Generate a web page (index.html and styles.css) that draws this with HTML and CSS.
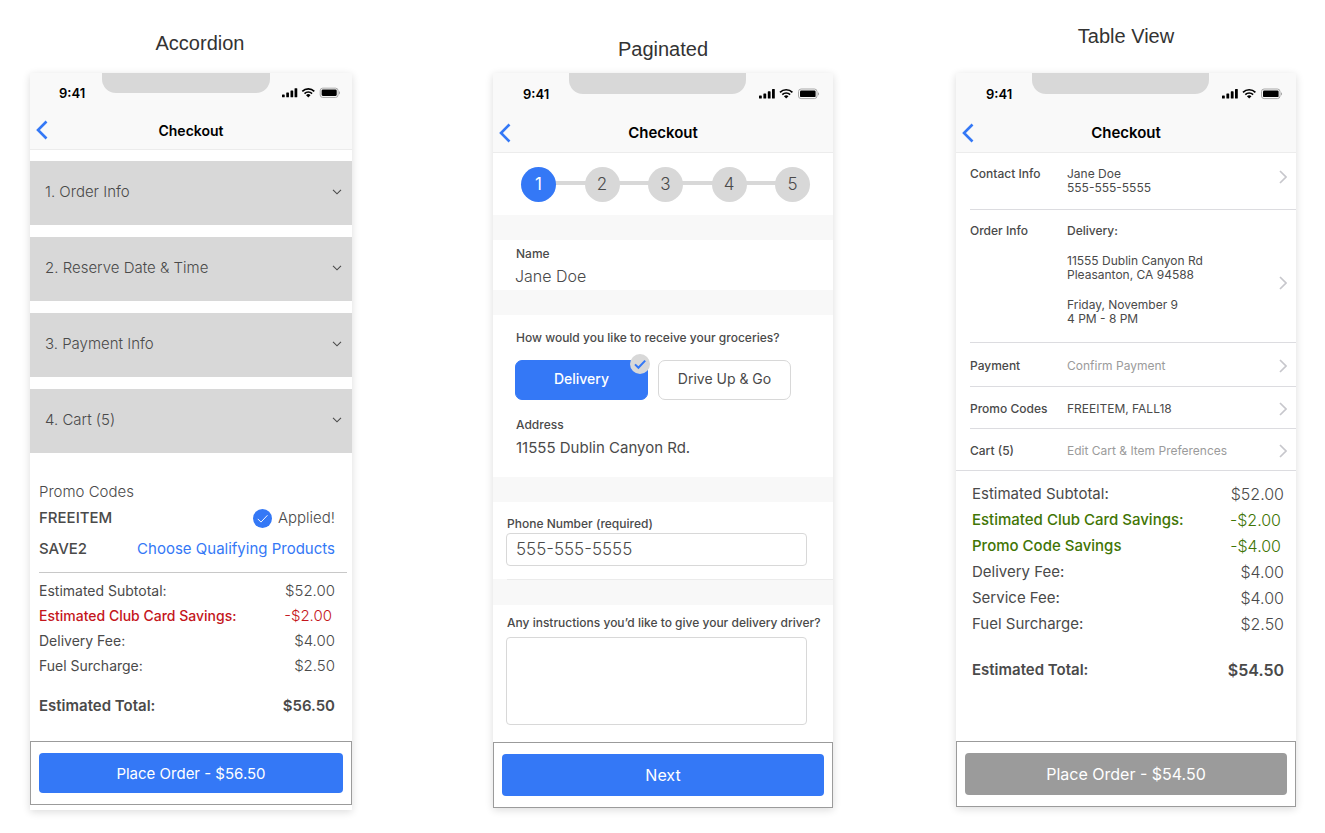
FILE: index.html
```html
<!DOCTYPE html>
<html lang="en">

<head>
    <meta charset="UTF-8">
    <meta name="viewport" content="width=device-width, initial-scale=1.0">
    <title>Checkout layouts</title>
    <link rel="stylesheet" href="styles.css">
</head>

<body>
    <!-- shared icons -->
    <svg class="sprite" aria-hidden="true">
        <symbol id="status" viewBox="0 0 60 12">
            <rect x="0" y="7.5" width="2.8" height="3" rx="0.6" />
            <rect x="4.4" y="5.5" width="2.8" height="5" rx="0.6" />
            <rect x="8.8" y="3.3" width="2.8" height="7.2" rx="0.6" />
            <rect x="13" y="1" width="2.8" height="9.5" rx="0.6" />
            <path d="M21 4.3a8.8 8.8 0 0 1 12.4 0M23.3 6.6a5.6 5.6 0 0 1 7.8 0" fill="none" stroke="#000" stroke-width="1.7" />
            <path d="M24.9 8.2a3.4 3.4 0 0 1 4.6 0L27.2 10.6z" />
            <rect x="39.5" y="1" width="18.5" height="9.6" rx="2.6" fill="none" stroke="#a8a8a8" />
            <rect x="41" y="2.5" width="15.6" height="6.6" rx="1.2" />
            <path d="M59 4.2c1.5.5 1.5 2.8 0 3.3z" fill="#a8a8a8" />
        </symbol>
        <symbol id="back" viewBox="0 0 12 20">
            <path d="M10.5 1.5L2 10l8.5 8.5" fill="none" stroke="#3478f6" stroke-width="2.6" />
        </symbol>
        <symbol id="down" viewBox="0 0 10 6">
            <path d="M1 .8l4 4 4-4" fill="none" stroke="#4a4a4a" stroke-width="1.1" />
        </symbol>
        <symbol id="next" viewBox="0 0 8 14">
            <path d="M1 1l6 6-6 6" fill="none" stroke="#c7c7cc" stroke-width="1.7" />
        </symbol>
        <symbol id="check" viewBox="0 0 20 20">
            <path d="M5 10.4l3.4 3.4L15.2 6.600" fill="none" stroke="currentColor" />
        </symbol>
    </svg>

    <main class="page">
        <section class="variant accordion">
            <h2 class="title">Accordion</h2>
            <div class="phone">
                <header class="top">
                    <div class="status">
                        <span class="time">9:41</span>
                        <span class="notch"></span>
                        <svg class="statusIcons"><use href="#status" /></svg>
                    </div>
                    <div class="nav">
                        <button class="back" aria-label="Back"><svg><use href="#back" /></svg></button>
                        <h3>Checkout</h3>
                    </div>
                </header>

                <div class="steps">
                    <button class="step">1. Order Info <svg><use href="#down" /></svg></button>
                    <button class="step">2. Reserve Date &amp; Time <svg><use href="#down" /></svg></button>
                    <button class="step">3. Payment Info <svg><use href="#down" /></svg></button>
                    <button class="step">4. Cart (5) <svg><use href="#down" /></svg></button>
                </div>

                <div class="promo">
                    <p>Promo Codes</p>
                    <p><b>FREEITEM</b> <span class="applied"><svg><use href="#check" /></svg>Applied!</span></p>
                    <p><b>SAVE2</b> <a href="#">Choose Qualifying Products</a></p>
                </div>

                <table class="summary">
                    <tr><th>Estimated Subtotal:</th><td>$52.00</td></tr>
                    <tr class="saving"><th>Estimated Club Card Savings:</th><td>-$2.00</td></tr>
                    <tr><th>Delivery Fee:</th><td>$4.00</td></tr>
                    <tr><th>Fuel Surcharge:</th><td>$2.50</td></tr>
                    <tr class="total"><th>Estimated Total:</th><td>$56.50</td></tr>
                </table>

                <footer class="bottom"><button class="order">Place Order - $56.50</button></footer>
            </div>
        </section>

        <section class="variant paginated">
            <h2 class="title">Paginated</h2>
            <div class="phone">
                <header class="top">
                    <div class="status">
                        <span class="time">9:41</span>
                        <span class="notch"></span>
                        <svg class="statusIcons"><use href="#status" /></svg>
                    </div>
                    <div class="nav">
                        <button class="back" aria-label="Back"><svg><use href="#back" /></svg></button>
                        <h3>Checkout</h3>
                    </div>
                </header>

                <ol class="pages">
                    <li class="active">1</li>
                    <li>2</li>
                    <li>3</li>
                    <li>4</li>
                    <li>5</li>
                </ol>

                <div class="block name">
                    <p class="label">Name</p>
                    <p class="value light">Jane Doe</p>
                </div>

                <div class="block receive">
                    <p class="label" id="receive">How would you like to receive your groceries?</p>
                    <div class="choices" role="radiogroup" aria-labelledby="receive">
                        <label class="choice selected">
                            <input type="radio" name="receive" checked>Delivery
                            <svg class="badge"><use href="#check" /></svg>
                        </label>
                        <label class="choice"><input type="radio" name="receive">Drive Up &amp; Go</label>
                    </div>
                    <p class="label">Address</p>
                    <p class="value address">11555 Dublin Canyon Rd.</p>
                </div>

                <div class="block phoneNumber">
                    <label class="label" for="phone">Phone Number (required)</label>
                    <input type="tel" id="phone" class="field" value="555-555-5555">
                </div>
                <hr class="line">

                <div class="block instructions">
                    <label class="label" for="notes">Any instructions you’d like to give your delivery driver?</label>
                    <textarea id="notes" class="field"></textarea>
                </div>

                <footer class="bottom"><button class="order">Next</button></footer>
            </div>
        </section>

        <section class="variant tableView">
            <h2 class="title">Table View</h2>
            <div class="phone">
                <header class="top">
                    <div class="status">
                        <span class="time">9:41</span>
                        <span class="notch"></span>
                        <svg class="statusIcons"><use href="#status" /></svg>
                    </div>
                    <div class="nav">
                        <button class="back" aria-label="Back"><svg><use href="#back" /></svg></button>
                        <h3>Checkout</h3>
                    </div>
                </header>

                <div class="rows">
                    <a href="#" class="row contact">
                        <span class="rowName">Contact Info</span>
                        <span class="rowText">Jane Doe<br>555-555-5555</span>
                        <svg><use href="#next" /></svg>
                    </a>
                    <a href="#" class="row info">
                        <span class="rowName">Order Info</span>
                        <span class="rowText">
                            <span class="medium">Delivery:</span>
                            <span>11555 Dublin Canyon Rd<br>Pleasanton, CA 94588</span>
                            <span>Friday, November 9<br>4 PM - 8 PM</span>
                        </span>
                        <svg><use href="#next" /></svg>
                    </a>
                    <a href="#" class="row payment">
                        <span class="rowName">Payment</span>
                        <span class="rowText hint">Confirm Payment</span>
                        <svg><use href="#next" /></svg>
                    </a>
                    <a href="#" class="row">
                        <span class="rowName">Promo Codes</span>
                        <span class="rowText">FREEITEM, FALL18</span>
                        <svg><use href="#next" /></svg>
                    </a>
                    <a href="#" class="row">
                        <span class="rowName">Cart (5)</span>
                        <span class="rowText hint">Edit Cart &amp; Item Preferences</span>
                        <svg><use href="#next" /></svg>
                    </a>
                </div>

                <table class="summary">
                    <tr><th>Estimated Subtotal:</th><td>$52.00</td></tr>
                    <tr class="saving"><th>Estimated Club Card Savings:</th><td>-$2.00</td></tr>
                    <tr class="saving"><th>Promo Code Savings</th><td>-$4.00</td></tr>
                    <tr><th>Delivery Fee:</th><td>$4.00</td></tr>
                    <tr><th>Service Fee:</th><td>$4.00</td></tr>
                    <tr><th>Fuel Surcharge:</th><td>$2.50</td></tr>
                    <tr class="total"><th>Estimated Total:</th><td>$54.50</td></tr>
                </table>

                <footer class="bottom"><button class="order" disabled>Place Order - $54.50</button></footer>
            </div>
        </section>
    </main>
</body>

</html>
```
FILE: styles.css
```css
* {
    box-sizing: border-box;
}

body {
    margin: 0;
    background: white;
    color: #4a4a4a;
    font-family: Inter, "Liberation Sans", sans-serif;
    font-size: 15px;
}

h2,
h3,
p,
ol {
    margin: 0;
    padding: 0;
}

button,
input,
textarea {
    font: inherit;
    color: inherit;
}

button {
    border: 0;
    padding: 0;
    background: none;
}

a {
    color: #3478f6;
    text-decoration: none;
}

.sprite {
    display: none;
}

.page {
    display: flex;
    gap: 123px;
    padding: 0 29px 24px 30px;
}

.variant {
    flex: 340 1 0;
    min-width: 0;
}

.accordion {
    flex-grow: 322;
    margin-right: 18px;
}

.title {
    height: 73px;
    font-family: "Liberation Sans", sans-serif;
    font-size: 20px;
    font-weight: 400;
    line-height: 24px;
    color: #333;
    text-align: center;
}

.accordion .title {
    padding: 31px 0 0 18px;
}

.paginated .title {
    padding-top: 37px;
}

.tableView .title {
    padding-top: 24px;
}

.phone {
    background: white;
    box-shadow: 0 2px 8px rgba(0, 0, 0, 0.14);
}

/* status bar and navigation */
.top {
    background: #f9f9f9;
    border-bottom: 1px solid #ececec;
    color: black;
}

.status {
    display: grid;
    grid-template-columns: 72fr 168fr 82fr;
    height: 40px;
}

.time {
    padding-left: 30px;
    font-size: 13px;
    font-weight: 600;
    line-height: 43px;
}

.notch {
    height: 21px;
    background: #d8d8d8;
    border-radius: 0 0 14px 14px;
}

.statusIcons {
    width: 60px;
    height: 12px;
    margin: 15px 0 0 13px;
}

.nav {
    display: grid;
    grid-template-columns: 1fr auto 1fr;
    align-items: center;
    height: 39px;
}

.nav h3 {
    font-size: 15px;
    font-weight: 600;
}

.back {
    justify-self: start;
    height: 20px;
    margin-left: 6px;
}

.back svg {
    display: block;
    width: 12px;
    height: 20px;
}

.accordion .status {
    height: 38px;
}

.accordion .notch {
    height: 20px;
}

.accordion .time {
    padding-left: 29px;
    line-height: 41px;
}

.accordion .statusIcons {
    width: 58px;
    margin: 14px 0 0 12px;
}

.accordion .nav {
    height: 38px;
}

.accordion h3 {
    font-size: 14px;
}

/* accordion */
.accordion .phone {
    padding-bottom: 5px;
}

.steps {
    display: grid;
    gap: 12px;
    padding-top: 11px;
}

.step {
    display: flex;
    justify-content: space-between;
    align-items: center;
    height: 64px;
    padding: 0 10px 3px 15px;
    background: #d8d8d8;
    font-weight: 300;
}

.step svg {
    width: 10px;
    height: 6px;
}

.promo {
    margin: 26px 5px 0 9px;
    padding-bottom: 10px;
    border-bottom: 1px solid #c8c8c8;
    line-height: 26px;
    font-weight: 300;
}

.promo p {
    display: flex;
    justify-content: space-between;
    padding-right: 12px;
}

.promo p:last-child {
    margin-top: 5px;
}

.promo b {
    font-weight: 500;
}

.promo a {
    font-weight: 400;
}

.applied {
    display: flex;
    align-items: center;
    gap: 6px;
}

.applied svg {
    width: 19px;
    height: 19px;
    border-radius: 50%;
    background: #3478f6;
    color: white;
}

/* order summary */
.summary {
    width: 100%;
    border-collapse: collapse;
    line-height: 25px;
}

.summary th {
    padding: 0;
    font-weight: 400;
    text-align: left;
}

.summary td {
    padding: 0;
    font-weight: 300;
    text-align: right;
}

.accordion .summary {
    margin-top: 5px;
}

.accordion .summary th {
    padding-left: 9px;
    font-size: 14px;
}

.accordion .summary td {
    padding-right: 17px;
}

.accordion .saving {
    color: #c4161c;
}

.accordion .summary .saving th {
    font-weight: 500;
}

.accordion .summary .saving td {
    padding-right: 20px;
}

.summary .total th,
.summary .total td {
    padding-top: 15px;
    font-weight: 600;
}

.accordion .summary .total th {
    font-size: 15px;
}

.bottom {
    padding: 11px 8px;
    border: 1px solid #9b9b9b;
}

.order {
    display: block;
    width: 100%;
    height: 42px;
    border-radius: 4px;
    background: #3478f6;
    color: white;
    font-size: 16px;
}

.order:disabled {
    background: #9b9b9b;
}

.accordion .order {
    height: 40px;
    font-size: 15px;
}

.accordion .bottom {
    margin-top: 23px;
}

/* paginated */
.paginated .phone {
    background: #f8f8f8;
}

.pages {
    display: flex;
    justify-content: space-between;
    height: 62px;
    padding: 14px 23px 0 28px;
    background: linear-gradient(#d8d8d8, #d8d8d8) center 28px / 250px 4px no-repeat white;
    list-style: none;
}

.pages li {
    width: 35px;
    height: 35px;
    border-radius: 50%;
    background: #d8d8d8;
    font-size: 17px;
    font-weight: 300;
    line-height: 35px;
    text-align: center;
}

.pages .active {
    background: #3478f6;
    color: white;
    font-weight: 400;
}

.block {
    margin-top: 25px;
    padding: 0 22px;
    background: white;
}

.label {
    display: block;
    padding-left: 1px;
    font-size: 12px;
    font-weight: 500;
    line-height: 18px;
    white-space: nowrap;
}

.value {
    font-size: 16px;
    line-height: 27px;
}

.light {
    font-weight: 300;
}

.address {
    padding-left: 1px;
    font-size: 15px;
}

.name {
    padding-top: 5px;
}

.receive {
    padding-top: 14px;
    padding-bottom: 16px;
}

.choices {
    display: flex;
    gap: 10px;
    margin: 13px 20px 16px 0;
}

.choice {
    position: relative;
    flex: 1;
    height: 40px;
    border: 1px solid #d8d8d8;
    border-radius: 7px;
    font-size: 14px;
    line-height: 36px;
    text-align: center;
}

.choice input {
    position: absolute;
    opacity: 0;
}

.selected {
    border-color: #3478f6;
    background: #3478f6;
    color: white;
    font-weight: 500;
}

.badge {
    position: absolute;
    top: -7px;
    right: -3px;
    width: 20px;
    height: 20px;
    border-radius: 50%;
    background: #d8d8d8;
    color: #3478f6;
    stroke-width: 2;
}

.phoneNumber,
.instructions {
    padding: 13px 26px 13px 13px;
}

.field {
    display: block;
    width: 100%;
    height: 33px;
    padding: 0 9px 2px;
    border: 1px solid #d8d8d8;
    border-radius: 4px;
    background: white;
    font-size: 17px;
    font-weight: 300;
}

.line {
    height: 1px;
    margin: 0 0 0 14px;
    border: 0;
    background: #ebebeb;
}

.instructions {
    padding-top: 9px;
    padding-bottom: 17px;
}

.instructions .field {
    height: 88px;
    margin-top: 5px;
    resize: none;
}

.paginated .bottom {
    background: white;
}

/* table view */
.rows {
    border-bottom: 1px solid #dcdce0;
}

.row {
    display: grid;
    grid-template-columns: 97px 1fr 8px;
    align-items: center;
    height: 42px;
    margin-left: 14px;
    padding: 3px 9px 0 0;
    border-bottom: 1px solid #dcdce0;
    color: #4a4a4a;
    font-size: 12px;
    line-height: 14px;
}

.row:last-child {
    height: 41px;
    border-bottom: 0;
}

.row svg {
    width: 8px;
    height: 14px;
}

.rowName,
.medium {
    font-weight: 500;
}

.hint {
    color: #9b9b9b;
}

.contact,
.info {
    align-items: start;
    height: 57px;
    padding-top: 14px;
}

.contact svg {
    margin-top: 3px;
}

.info {
    height: 133px;
}

.info svg {
    align-self: center;
}

.info .rowText {
    display: grid;
    gap: 16px;
}

.payment {
    height: 44px;
}

.tableView .summary {
    margin-top: 10px;
    line-height: 26px;
}

.tableView .summary th {
    padding-left: 16px;
}

.tableView .summary td {
    padding-right: 12px;
    font-size: 16px;
}

.tableView .saving {
    color: #417505;
}

.tableView .summary .saving th {
    font-weight: 500;
}

.tableView .summary .saving td {
    padding-right: 15px;
}

.tableView .summary .total th,
.tableView .summary .total td {
    padding-top: 20px;
}

.tableView .bottom {
    margin-top: 58px;
}
```
